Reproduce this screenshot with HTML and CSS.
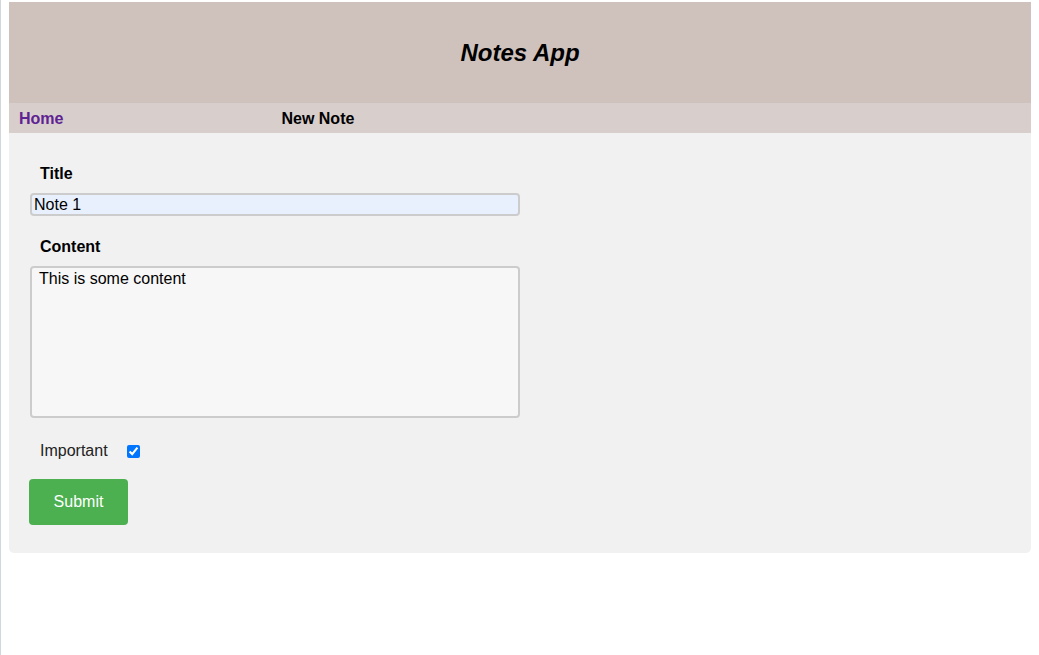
FILE: index.html
```html
<!DOCTYPE html>
<html lang="en">
<head>
<meta charset="utf-8">
<title>Notes App</title>
<link rel="stylesheet" href="styles.css">
</head>
<body>
<div class="page">
  <header class="header">
    <h1 class="app-title">Notes App</h1>
  </header>
  <nav class="nav">
    <a class="nav-link visited" href="#">Home</a>
    <span class="nav-link current">New Note</span>
  </nav>
  <main class="panel">
    <form class="note-form">
      <label class="field-label" for="title">Title</label>
      <input class="text-input" id="title" type="text" value="Note 1">
      <label class="field-label" for="content">Content</label>
      <textarea class="text-area" id="content">This is some content</textarea>
      <div class="check-row">
        <label for="important">Important</label>
        <input class="check" id="important" type="checkbox" checked>
      </div>
      <button class="submit" type="button">Submit</button>
    </form>
  </main>
</div>
</body>
</html>
```

FILE: styles.css
```css
html, body {
  margin: 0;
  padding: 0;
  background: #ffffff;
}

body {
  font-family: "Liberation Sans", Arial, sans-serif;
  font-size: 16px;
  color: #000;
}

.page {
  box-sizing: border-box;
  min-height: 655px;
  border-left: 1px solid #d2d6dd;
  padding: 2px 8px 0 8px;
}

.header {
  height: 101px;
  background: #cfc2bd;
  display: flex;
  align-items: center;
  justify-content: center;
}

.app-title {
  margin: 0;
  font-size: 24px;
  font-weight: bold;
  font-style: italic;
  line-height: 28px;
  color: #000;
}

.nav {
  box-sizing: border-box;
  height: 30px;
  background: #d8cecc;
  display: flex;
  align-items: center;
  gap: 218px;
  padding: 2px 0 0 10px;
}

.nav-link {
  font-weight: bold;
  font-size: 16px;
  text-decoration: none;
  color: #000;
}

.nav-link.visited {
  color: #5f2293;
}

.panel {
  display: block;
  background: #f1f1f1;
  border-radius: 0 0 5px 5px;
  padding: 20px 20px 28px 21px;
}

.note-form {
  display: flex;
  flex-direction: column;
  align-items: flex-start;
}

.field-label {
  display: block;
  padding: 11px 10px 9px;
  line-height: 20px;
  font-weight: bold;
}

.text-input {
  box-sizing: border-box;
  width: 490px;
  height: 23px;
  margin: 0 0 10px 0;
  padding: 0 2px;
  border: 2px solid #cccccc;
  border-radius: 4px;
  background: #e8f0fe;
  font-family: "Liberation Sans", Arial, sans-serif;
  font-size: 16px;
  color: #000;
}

.text-area {
  box-sizing: border-box;
  width: 490px;
  height: 152px;
  margin: 0 0 13px 0;
  padding: 2px 7px;
  border: 2px solid #cccccc;
  border-radius: 4px;
  background: #f7f7f7;
  font-family: "Liberation Sans", Arial, sans-serif;
  font-size: 16px;
  line-height: 18px;
  color: #000;
  resize: none;
}

.check-row {
  display: flex;
  align-items: center;
  padding: 10px 10px;
  line-height: 20px;
  color: #222;
}

.check {
  width: 13px;
  height: 13px;
  margin: 0 0 0 19px;
}

.submit {
  margin-top: 8px;
  margin-left: -1px;
  width: 99px;
  height: 46px;
  border: none;
  border-radius: 4px;
  background: #4caf50;
  color: #fff;
  font-family: "Liberation Sans", Arial, sans-serif;
  font-size: 16px;
  cursor: pointer;
}
```
